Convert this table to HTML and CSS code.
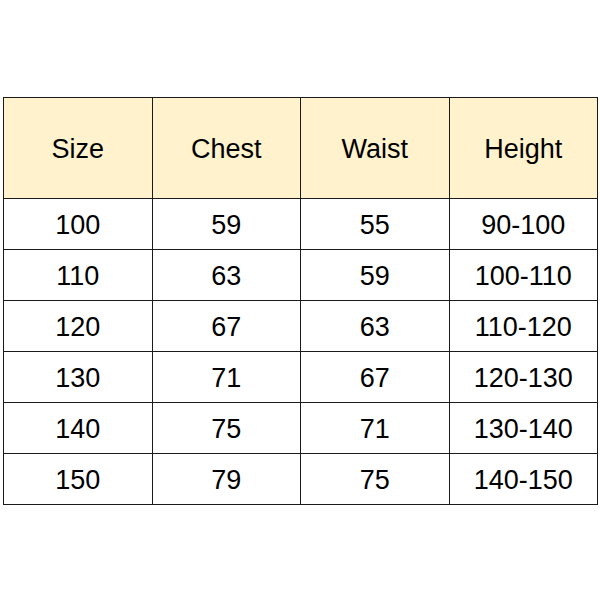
FILE: index.html
```html
<!DOCTYPE html>
<html>
<head>
<meta charset="utf-8">
<link rel="stylesheet" href="styles.css">
</head>
<body>
<div class="wrap">
<table class="size-table">
<thead>
<tr><th>Size</th><th>Chest</th><th>Waist</th><th>Height</th></tr>
</thead>
<tbody>
<tr><td>100</td><td>59</td><td>55</td><td>90-100</td></tr>
<tr><td>110</td><td>63</td><td>59</td><td>100-110</td></tr>
<tr><td>120</td><td>67</td><td>63</td><td>110-120</td></tr>
<tr><td>130</td><td>71</td><td>67</td><td>120-130</td></tr>
<tr><td>140</td><td>75</td><td>71</td><td>130-140</td></tr>
<tr><td>150</td><td>79</td><td>75</td><td>140-150</td></tr>
</tbody>
</table>
</div>
</body>
</html>
```
FILE: styles.css
```css
html, body {
  margin: 0;
  padding: 0;
  background: #ffffff;
  width: 600px;
  height: 600px;
}
.wrap {
  padding: 97px 0 0 3px;
}
.size-table {
  border-collapse: collapse;
  width: 595px;
  table-layout: fixed;
  font-family: "Liberation Sans", Arial, sans-serif;
  font-size: 27px;
  color: #000;
}
.size-table th,
.size-table td {
  border: 1.5px solid #1a1a1a;
  text-align: center;
  vertical-align: middle;
  padding: 2px 0 0 0;
  font-weight: normal;
}
.size-table th {
  background: #fff2cc;
  height: 98px;
}
.size-table td {
  height: 48px;
}
```
